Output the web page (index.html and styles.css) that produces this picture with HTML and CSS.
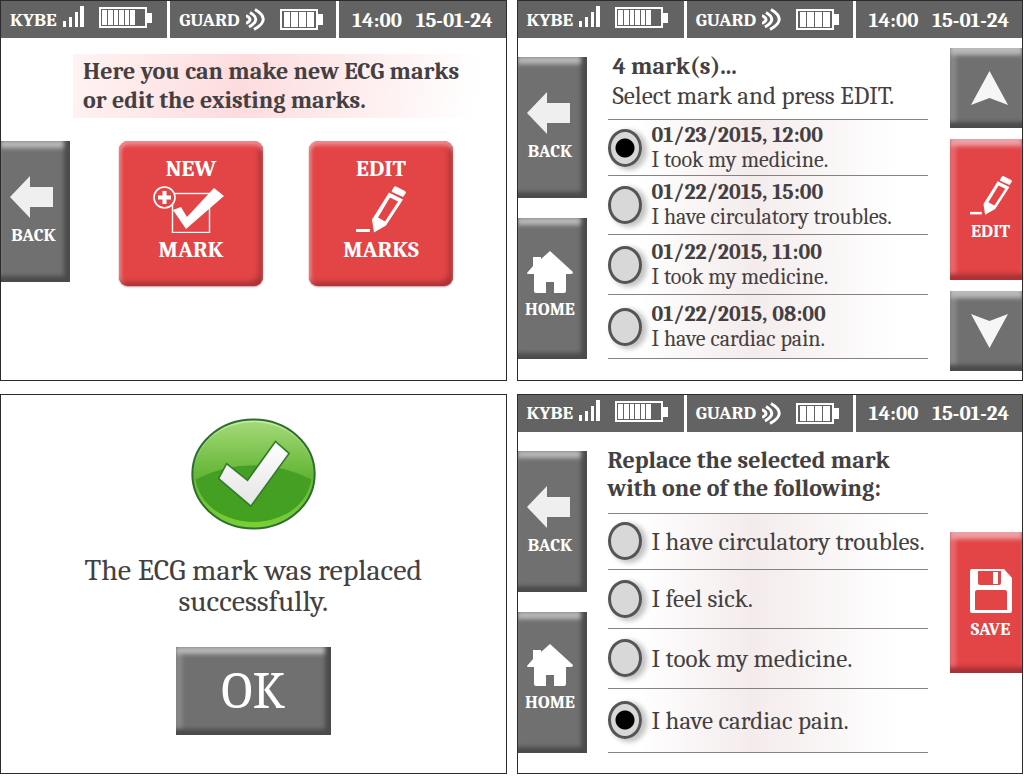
FILE: index.html
```html
<!DOCTYPE html>
<html lang="en">
<head>
  <meta charset="UTF-8" />
  <meta name="viewport" content="width=device-width, initial-scale=1" />
  <title>ECG marks</title>
  <link rel="stylesheet" href="styles.css">
</head>
<body>
  <!-- shared icons -->
  <svg class="sprite" aria-hidden="true">
    <symbol id="signal" viewBox="0 0 21 21">
      <path d="M0 15h3v6H0zM6 11h3v10H6zM12 6h3v15h-3zM17 0h4v21h-4z" fill="currentColor" />
    </symbol>
    <symbol id="battery-full" viewBox="0 0 53 21">
      <rect x="1" y="1" width="46" height="19" fill="none" stroke="currentColor" stroke-width="2" />
      <path d="M48 6h5v10h-5zM3 3h5v15H3zM9 3h5v15H9zM15 3h4v15h-4zM20 3h5v15h-5zM26 3h4v15h-4zM31 3h5v15h-5z" fill="currentColor" />
    </symbol>
    <symbol id="battery-small" viewBox="0 0 43 21">
      <rect x="1" y="1" width="36" height="19" fill="none" stroke="currentColor" stroke-width="2" />
      <path d="M38 5h5v11h-5zM4 3h6v15H4zM11 3h7v15h-7zM19 3h7v15h-7zM27 3h7v15h-7z" fill="currentColor" />
    </symbol>
    <symbol id="waves" viewBox="0 0 19 23">
      <path d="M0 7.500Q8 11.500 0 15.500M4 4.500Q16 11.500 3 19M9 1.500Q26 11.500 8 21.500" fill="none" stroke="currentColor" stroke-width="3" />
    </symbol>
    <symbol id="arrow-left" viewBox="0 0 43 42">
      <path d="M0 21L20 0v11h23v20H20v11z" fill="#efefef" />
    </symbol>
    <symbol id="arrow-up" viewBox="0 0 37 34">
      <path d="M18.500 0L37 34L18.500 27L0 34z" fill="#f6f6f6" />
    </symbol>
    <symbol id="house" viewBox="0 0 46 42">
      <path d="M23 0L46 21Q46 23 44 23H39V40Q39 42 37 42H27V31H19V42H9Q7 42 7 40V23H1Q0 23 0 22L6 15V6H14V8z" fill="currentColor" />
    </symbol>
    <symbol id="pencil" viewBox="0 0 50 46">
      <path d="M0 42.500h14v3H0z" fill="currentColor" />
      <path d="M39 0L49 5Q50 6 49 7L47 10L36 5L38 1z" fill="currentColor" stroke="currentColor" stroke-linejoin="round" />
      <path fill-rule="evenodd" d="M33 6L47 13L30 39L18 46L16 33zM34 11L22 31L29 35L42 15z" fill="currentColor" />
    </symbol>
    <symbol id="new-mark" viewBox="0 0 71 47">
      <rect x="19.500" y="7.500" width="37" height="39" fill="none" stroke="currentColor" stroke-width="1.400" />
      <circle cx="11.500" cy="11.500" r="10.500" fill="#e34446" stroke="currentColor" stroke-width="1.600" />
      <path d="M9.500 5h4v4.500H18v4h-4.500V18h-4v-4.500H5v-4h4.500z" fill="currentColor" />
      <path d="M20 24L28 21L34 31L61 2L71 10L33 43z" fill="currentColor" />
    </symbol>
    <symbol id="floppy" viewBox="0 0 42 44">
      <path fill-rule="evenodd" d="M2 0H34L42 9V42Q42 44 40 44H2Q0 44 0 42V2Q0 0 2 0zM8 2V14Q8 16 10 16H29Q31 16 31 14V2zM7 21Q5 21 5 23V41H37V23Q37 21 35 21z" fill="currentColor" />
      <path d="M23 3h5v12h-5z" fill="currentColor" />
    </symbol>
  </svg>

  <div class="screens">
    <section class="screen">
      <header class="status-bar">
        <div class="status-cell">
          <span>KYBE</span>
          <svg class="icon-signal"><use href="#signal" /></svg>
          <svg class="icon-battery-full"><use href="#battery-full" /></svg>
        </div>
        <div class="status-cell">
          <span>GUARD</span>
          <svg class="icon-waves"><use href="#waves" /></svg>
          <svg class="icon-battery-small"><use href="#battery-small" /></svg>
        </div>
        <div class="status-cell clock">
          <span>14:00</span>
          <span>15-01-24</span>
        </div>
      </header>
      <p class="notice">Here you can make new ECG marks<br>or edit the existing marks.</p>
      <div class="tile-row">
        <button class="key key-left" type="button">
          <svg class="icon-arrow"><use href="#arrow-left" /></svg>
          <span>BACK</span>
        </button>
        <div class="tiles">
          <button class="tile" type="button">
            <span>NEW</span>
            <svg class="icon-new"><use href="#new-mark" /></svg>
            <span>MARK</span>
          </button>
          <button class="tile" type="button">
            <span>EDIT</span>
            <svg class="icon-pencil"><use href="#pencil" /></svg>
            <span>MARKS</span>
          </button>
        </div>
      </div>
    </section>

    <section class="screen">
      <header class="status-bar">
        <div class="status-cell">
          <span>KYBE</span>
          <svg class="icon-signal"><use href="#signal" /></svg>
          <svg class="icon-battery-full"><use href="#battery-full" /></svg>
        </div>
        <div class="status-cell">
          <span>GUARD</span>
          <svg class="icon-waves"><use href="#waves" /></svg>
          <svg class="icon-battery-small"><use href="#battery-small" /></svg>
        </div>
        <div class="status-cell clock">
          <span>14:00</span>
          <span>15-01-24</span>
        </div>
      </header>
      <div class="screen-body">
        <nav class="keys-left">
          <button class="key key-left" type="button">
            <svg class="icon-arrow"><use href="#arrow-left" /></svg>
            <span>BACK</span>
          </button>
          <button class="key key-left key-home" type="button">
            <svg class="icon-house"><use href="#house" /></svg>
            <span>HOME</span>
          </button>
        </nav>
        <main class="content">
          <div class="heading heading-indent">
            <h2>4 mark(s)...</h2>
            <p>Select mark and press EDIT.</p>
          </div>
          <div class="options">
            <label class="option">
              <input type="radio" name="mark" checked>
              <span class="option-text"><b>01/23/2015, 12:00</b>I took my medicine.</span>
            </label>
            <label class="option">
              <input type="radio" name="mark">
              <span class="option-text"><b>01/22/2015, 15:00</b>I have circulatory troubles.</span>
            </label>
            <label class="option">
              <input type="radio" name="mark">
              <span class="option-text"><b>01/22/2015, 11:00</b>I took my medicine.</span>
            </label>
            <label class="option">
              <input type="radio" name="mark">
              <span class="option-text"><b>01/22/2015, 08:00</b>I have cardiac pain.</span>
            </label>
          </div>
        </main>
        <div class="keys-right">
          <button class="key key-right key-short" type="button" aria-label="Up">
            <svg class="icon-up"><use href="#arrow-up" /></svg>
          </button>
          <button class="key key-right key-red" type="button">
            <svg class="icon-edit"><use href="#pencil" /></svg>
            <span>EDIT</span>
          </button>
          <button class="key key-right key-short" type="button" aria-label="Down">
            <svg class="icon-up icon-down"><use href="#arrow-up" /></svg>
          </button>
        </div>
      </div>
    </section>

    <section class="screen message">
      <svg class="icon-success" viewBox="0 0 376 336">
        <defs>
          <linearGradient id="ball" x1="0" y1="0" x2="0" y2="1">
            <stop offset="0" stop-color="#a3d977" />
            <stop offset="0.500" stop-color="#68b83a" />
            <stop offset="1" stop-color="#43a01f" />
          </linearGradient>
          <linearGradient id="shade" x1="0" y1="0" x2="0" y2="1">
            <stop offset="0" stop-color="#459f26" />
            <stop offset="1" stop-color="#43a01f" />
          </linearGradient>
          <linearGradient id="rim" x1="0" y1="0" x2="0" y2="1">
            <stop offset="0" stop-color="#c9ecab" />
            <stop offset="0.500" stop-color="#65b43c" />
            <stop offset="1" stop-color="#7bcf35" />
          </linearGradient>
          <linearGradient id="tick" x1="0" y1="0" x2="0" y2="1">
            <stop offset="0" stop-color="#ffffff" />
            <stop offset="1" stop-color="#e4e4e4" />
          </linearGradient>
        </defs>
        <ellipse cx="188" cy="168" rx="184" ry="164" fill="url(#rim)" stroke="#2c6f2c" stroke-width="6" />
        <ellipse cx="188" cy="162" rx="176" ry="150" fill="url(#ball)" />
        <path d="M14 184Q100 142 188 142Q276 142 362 184Q352 250 290 286Q240 312 188 312Q136 312 86 286Q24 250 14 184z" fill="url(#shade)" />
        <path d="M107 137L170 187L254 70L295 106L180 265L83 182z" fill="url(#tick)" stroke="#347c2c" stroke-width="5" />
      </svg>
      <p>The ECG mark was replaced<br>successfully.</p>
      <button class="key-ok" type="button">OK</button>
    </section>

    <section class="screen">
      <header class="status-bar">
        <div class="status-cell">
          <span>KYBE</span>
          <svg class="icon-signal"><use href="#signal" /></svg>
          <svg class="icon-battery-full"><use href="#battery-full" /></svg>
        </div>
        <div class="status-cell">
          <span>GUARD</span>
          <svg class="icon-waves"><use href="#waves" /></svg>
          <svg class="icon-battery-small"><use href="#battery-small" /></svg>
        </div>
        <div class="status-cell clock">
          <span>14:00</span>
          <span>15-01-24</span>
        </div>
      </header>
      <div class="screen-body">
        <nav class="keys-left">
          <button class="key key-left" type="button">
            <svg class="icon-arrow"><use href="#arrow-left" /></svg>
            <span>BACK</span>
          </button>
          <button class="key key-left key-home" type="button">
            <svg class="icon-house"><use href="#house" /></svg>
            <span>HOME</span>
          </button>
        </nav>
        <main class="content">
          <div class="heading">
            <h2>Replace the selected mark<br>with one of the following:</h2>
          </div>
          <div class="options options-large">
            <label class="option">
              <input type="radio" name="replacement">
              <span class="option-text">I have circulatory troubles.</span>
            </label>
            <label class="option">
              <input type="radio" name="replacement">
              <span class="option-text">I feel sick.</span>
            </label>
            <label class="option">
              <input type="radio" name="replacement">
              <span class="option-text">I took my medicine.</span>
            </label>
            <label class="option">
              <input type="radio" name="replacement" checked>
              <span class="option-text">I have cardiac pain.</span>
            </label>
          </div>
        </main>
        <div class="keys-right keys-middle">
          <button class="key key-right key-red key-save" type="button">
            <svg class="icon-floppy"><use href="#floppy" /></svg>
            <span>SAVE</span>
          </button>
        </div>
      </div>
    </section>
  </div>
</body>
</html>
```
FILE: styles.css
```css
:root {
  --gray: #707070;
  --bar: #636363;
  --red: #e34446;
  --text: #444041;
  --line: #858282;
}

* {
  box-sizing: border-box;
}

body {
  margin: 0;
  background: #fff;
  color: var(--text);
  font-family: Cambria, Caladea, 'Liberation Serif', serif;
}

h2,
p {
  margin: 0;
}

svg {
  display: block;
  flex: none;
}

button {
  border: none;
  padding: 0;
  color: #fff;
  font-family: inherit;
  font-weight: 700;
  cursor: pointer;
}

.sprite {
  position: absolute;
  width: 0;
  height: 0;
}

.screens {
  display: grid;
  grid-template-columns: minmax(0, 1fr) minmax(0, 1fr);
  grid-auto-rows: 1fr;
  gap: 13px 10px;
  min-height: 100vh;
  padding: 0 1px 7px 0;
}

.screen {
  display: flex;
  flex-direction: column;
  border: 1px solid #2b2b2b;
}

/* status bar */
.status-bar {
  display: grid;
  grid-template-columns: 1fr 1fr 1fr;
  gap: 3px;
}

.status-cell {
  display: flex;
  align-items: center;
  height: 37px;
  padding-left: 9px;
  background: var(--bar);
  color: #fff;
  font-size: 19px;
  font-weight: 700;
}

.clock {
  gap: 14px;
  padding-left: 13px;
  font-size: 21px;
}

.icon-signal {
  width: 21px;
  height: 21px;
  margin: 0 15px 6px 6px;
}

.icon-battery-full {
  width: 53px;
  height: 21px;
  margin-bottom: 4px;
}

.icon-waves {
  width: 19px;
  height: 23px;
  margin: 0 15px 0 6px;
}

.icon-battery-small {
  width: 43px;
  height: 21px;
}

/* bevelled keys */
.key {
  display: flex;
  flex-direction: column;
  flex: none;
  align-items: center;
  justify-content: center;
  height: 141px;
  background: var(--gray);
  font-size: 18px;
  line-height: 22px;
}

.key-left {
  width: 69px;
  padding-right: 4px;
  box-shadow: inset -7px 0 4px -1px #4b4b4b, inset 0 -7px 4px -1px #4b4b4b, inset 0 8px 4px -1px #b9b9b9;
}

.key-right {
  width: 72px;
  padding-left: 9px;
  box-shadow: inset 0 -7px 4px -1px #4b4b4b, inset 0 8px 4px -1px #b9b9b9, inset 7px 0 4px -1px #8a8a8a;
}

.key-red {
  background: var(--red);
  box-shadow: inset 0 -7px 4px -1px #a83236, inset 0 8px 4px -1px #eda0a4, inset 7px 0 4px -1px #ec6a6e;
}

.key-short {
  height: 80px;
}

.key-home {
  padding-bottom: 6px;
}

.key-save {
  padding-top: 6px;
}

.icon-arrow {
  width: 43px;
  height: 42px;
  margin: 0 4px 7px 0;
}

.icon-house {
  width: 46px;
  height: 42px;
  margin-bottom: 6px;
}

.icon-up {
  width: 37px;
  height: 34px;
  margin-right: 2px;
}

.icon-down {
  transform: rotate(180deg);
}

.icon-edit {
  width: 42px;
  height: 39px;
  margin-bottom: 6px;
}

.icon-floppy {
  width: 42px;
  height: 44px;
  margin-bottom: 6px;
}

/* start screen */
.notice {
  margin: 16px 10px 0 72px;
  padding: 3px 10px;
  background: linear-gradient(100deg, #fff3f3, #fddcde 40%, #fff 95%);
  font-size: 24px;
  font-weight: 700;
  line-height: 29px;
}

.tile-row {
  display: flex;
  margin-top: 23px;
}

.tiles {
  display: flex;
  gap: 46px;
  margin-left: 49px;
}

.tile {
  display: flex;
  flex-direction: column;
  align-items: center;
  justify-content: center;
  gap: 3px;
  width: 144px;
  height: 145px;
  padding-bottom: 8px;
  border-radius: 9px;
  background: var(--red);
  box-shadow: inset 0 5px 4px -1px #f08c90, inset -5px -5px 5px -1px #a83438, inset 3px 0 3px #ec7276, 0 1px 2px #b99;
  font-size: 23px;
  line-height: 28px;
}

.icon-new {
  width: 71px;
  height: 47px;
  margin-right: 6px;
}

.icon-pencil {
  width: 50px;
  height: 47px;
}

/* list screens */
.screen-body {
  display: flex;
  flex: 1;
}

.keys-left {
  display: flex;
  flex-direction: column;
  gap: 20px;
  padding-top: 19px;
}

.content {
  flex: 1;
  min-width: 0;
  padding: 14px 22px 0 21px;
}

.heading {
  height: 67px;
}

.heading-indent {
  padding-left: 5px;
}

.heading h2 {
  font-size: 24px;
  line-height: 28px;
}

.heading p {
  font-size: 25px;
  line-height: 32px;
}

.options {
  display: grid;
  grid-template-rows: 56px 59px 60px 64px;
  border-top: 1px solid var(--line);
  background: linear-gradient(90deg, #fff 10%, #f4ebec 45%, #fff 90%);
}

.option {
  display: flex;
  align-items: center;
  gap: 10px;
  border-bottom: 1px solid var(--line);
  cursor: pointer;
}

.option input {
  appearance: none;
  flex: none;
  width: 34px;
  height: 38px;
  margin: 0;
  border: 3px solid #555;
  border-radius: 50%;
  background: #d8d8d8;
  box-shadow: 4px 2px 5px 1px #c4c4c4;
}

.option input:checked {
  background: radial-gradient(circle, #000 9px, #d8d8d8 10px);
}

.option-text {
  font-size: 22px;
  line-height: 25px;
  white-space: nowrap;
}

.option-text b {
  display: block;
}

.options-large .option-text {
  font-size: 25px;
}

.keys-right {
  display: flex;
  flex-direction: column;
  gap: 11px;
  padding-top: 10px;
}

.keys-middle {
  padding-top: 100px;
}

/* confirmation */
.message {
  align-items: center;
  padding-top: 23px;
}

.icon-success {
  width: 125px;
  height: 112px;
}

.message p {
  margin: 25px 0 30px;
  font-size: 30px;
  line-height: 31px;
  text-align: center;
}

.key-ok {
  width: 155px;
  height: 88px;
  background: var(--gray);
  box-shadow: inset 0 -7px 4px -1px #4b4b4b, inset -7px 0 4px -1px #4b4b4b, inset 0 8px 4px -1px #b9b9b9, inset 7px 0 4px -1px #8a8a8a;
  font-size: 52px;
  font-weight: 400;
  line-height: 60px;
}
```
